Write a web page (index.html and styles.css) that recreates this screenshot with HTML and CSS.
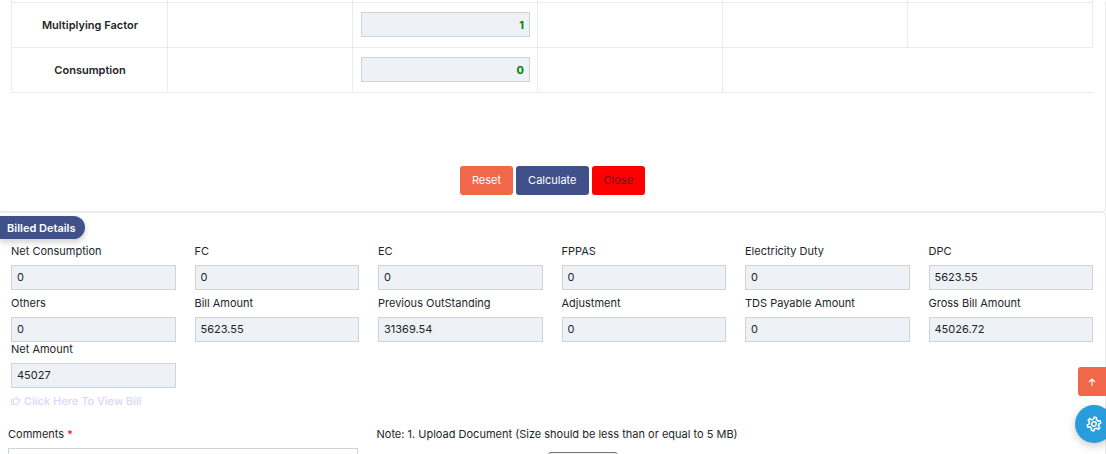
FILE: index.html
```html
<!DOCTYPE html>
<html lang="en">
<head>
    <meta charset="UTF-8">
    <meta name="viewport" content="width=device-width, initial-scale=1.0">
    <title>Billed Details</title>
    <link rel="stylesheet" href="styles.css">
</head>
<body>

    <section class="card">
        <table class="readings">
            <colgroup>
                <col class="col-name">
                <col><col><col><col><col>
            </colgroup>
            <tr class="row-end">
                <th></th><td></td><td></td><td></td><td></td><td></td>
            </tr>
            <tr>
                <th scope="row"><label for="factor">Multiplying Factor</label></th>
                <td></td>
                <td><input type="text" class="field reading" id="factor" value="1" readonly></td>
                <td></td>
                <td></td>
                <td></td>
            </tr>
            <tr>
                <th scope="row"><label for="consumption">Consumption</label></th>
                <td></td>
                <td><input type="text" class="field reading" id="consumption" value="0" readonly></td>
                <td></td>
                <td colspan="2" class="open"></td>
            </tr>
        </table>

        <div class="actions">
            <button type="reset" class="btn btn-reset">Reset</button>
            <button type="button" class="btn btn-calc">Calculate</button>
            <button type="button" class="btn btn-close">Close</button>
        </div>
    </section>

    <section class="card billed">
        <h2 class="badge">Billed Details</h2>

        <div class="grid">
            <div class="group">
                <label for="netConsumption">Net Consumption</label>
                <input type="text" class="field" id="netConsumption" value="0" readonly>
            </div>
            <div class="group">
                <label for="fc">FC</label>
                <input type="text" class="field" id="fc" value="0" readonly>
            </div>
            <div class="group">
                <label for="ec">EC</label>
                <input type="text" class="field" id="ec" value="0" readonly>
            </div>
            <div class="group">
                <label for="fppas">FPPAS</label>
                <input type="text" class="field" id="fppas" value="0" readonly>
            </div>
            <div class="group">
                <label for="duty">Electricity Duty</label>
                <input type="text" class="field" id="duty" value="0" readonly>
            </div>
            <div class="group">
                <label for="dpc">DPC</label>
                <input type="text" class="field" id="dpc" value="5623.55" readonly>
            </div>
            <div class="group">
                <label for="others">Others</label>
                <input type="text" class="field" id="others" value="0" readonly>
            </div>
            <div class="group">
                <label for="billAmount">Bill Amount</label>
                <input type="text" class="field" id="billAmount" value="5623.55" readonly>
            </div>
            <div class="group">
                <label for="previous">Previous OutStanding</label>
                <input type="text" class="field" id="previous" value="31369.54" readonly>
            </div>
            <div class="group">
                <label for="adjustment">Adjustment</label>
                <input type="text" class="field" id="adjustment" value="0" readonly>
            </div>
            <div class="group">
                <label for="tds">TDS Payable Amount</label>
                <input type="text" class="field" id="tds" value="0" readonly>
            </div>
            <div class="group">
                <label for="gross">Gross Bill Amount</label>
                <input type="text" class="field" id="gross" value="45026.72" readonly>
            </div>
        </div>

        <div class="grid">
            <div class="group">
                <label for="netAmount">Net Amount</label>
                <input type="text" class="field" id="netAmount" value="45027" readonly>
            </div>
        </div>

        <a href="#" class="view-bill">
            <svg width="10" height="9" viewBox="0 0 20 18" fill="none" stroke="currentColor" stroke-width="2" stroke-linejoin="round" aria-hidden="true">
                <path d="M1 7h4v10H1zM5 7.500c2 0 3.500-2.500 4-4.500.4-2 3.500-2 3.200.5 0 1-.5 2-1 3H17c2.700 0 2.700 3.500 0 3.500h-3M15.500 10c1 1.200.5 2.800-1 3M14.500 13c.8 1.200.3 2.500-1 2.700M13.500 15.500c0 1-.6 1.500-1.500 1.500H9c-1.800 0-2.500-1-4-1"/>
            </svg>
            Click Here To View Bill
        </a>

        <div class="bottom">
            <div class="comments">
                <label for="comments">Comments <span class="required">*</span></label>
                <textarea id="comments" rows="3"></textarea>
            </div>
            <div class="upload">
                <p>Note: 1. Upload Document (Size should be less than or equal to 5 MB)</p>
                <button type="button" class="file-btn" aria-label="Choose file"></button>
            </div>
        </div>
    </section>

    <button type="button" class="to-top" aria-label="Back to top">
        <svg width="8" height="8" viewBox="0 0 8 8" fill="none" stroke="currentColor" stroke-width="1.2" aria-hidden="true">
            <path d="M4 8V1M1 4l3-3 3 3"/>
        </svg>
    </button>
    <button type="button" class="settings" aria-label="Settings">
        <svg width="18" height="18" viewBox="0 0 24 24" fill="currentColor" aria-hidden="true">
            <path transform="rotate(12 12 12)" d="M12 8a4 4 0 0 1 4 4 4 4 0 0 1-4 4 4 4 0 0 1-4-4 4 4 0 0 1 4-4m0 2a2 2 0 0 0-2 2 2 2 0 0 0 2 2 2 2 0 0 0 2-2 2 2 0 0 0-2-2m-2 12c-.25 0-.46-.18-.5-.42l-.37-2.650c-.63-.25-1.170-.59-1.690-.99l-2.490 1.010c-.22.080-.49 0-.61-.22l-2-3.460c-.13-.22-.07-.49.12-.64l2.110-1.660L4.500 12l.07-1-2.110-1.630c-.19-.15-.25-.42-.12-.64l2-3.460c.12-.22.39-.31.61-.22l2.490 1c.52-.39 1.060-.73 1.690-.98l.37-2.650c.04-.24.25-.42.5-.42h4c.25 0 .46.18.5.42l.37 2.650c.63.25 1.170.59 1.690.98l2.490-1c.22-.09.49 0 .61.22l2 3.460c.13.22.07.49-.12.64L19.430 11l.07 1-.07 1 2.110 1.630c.19.15.25.42.12.64l-2 3.460c-.12.22-.39.31-.61.22l-2.490-1c-.52.39-1.060.73-1.690.98l-.37 2.650c-.04.24-.25.42-.5.42h-4m1.250-18-.37 2.610c-1.200.25-2.260.89-3.030 1.780L5.440 7.350l-.75 1.300L6.800 10.200a6.500 6.500 0 0 0 0 3.600l-2.120 1.560.75 1.300 2.430-1.040c.77.880 1.820 1.520 3.010 1.760l.37 2.620h1.520l.37-2.610c1.190-.25 2.240-.89 3.010-1.770l2.430 1.040.75-1.300-2.120-1.550c.4-1.170.4-2.440 0-3.610l2.110-1.550-.75-1.300-2.410 1.040a5.420 5.420 0 0 0-3.030-1.770L12.750 4h-1.500z"/>
        </svg>
    </button>

</body>
</html>
```
FILE: styles.css
```css
* {
    box-sizing: border-box;
}

body {
    font-family: Inter, "Open Sans", sans-serif;
    font-size: 11px;
    line-height: 16px;
    color: #212529;
    background-color: #fff;
    margin: 0;
    height: 100vh;
    overflow: hidden;
}

input, button, textarea {
    font: inherit;
}

.card {
    border-right: 1px solid #ebebeb;
    border-bottom: 1px solid #ebebeb;
    border-radius: 0 4px 4px 0;
}

.billed {
    border-top: 1px solid #ebebeb;
    padding-top: 3px;
}

/* readings table */
.readings {
    width: calc(100% - 23px);
    margin-left: 11px;
    border-collapse: collapse;
    table-layout: fixed;
}

.col-name {
    width: 156px;
}

.readings th, .readings td {
    height: 45px;
    padding: 0 7px 0 8px;
    border: 1px solid #ebebeb;
    text-align: center;
    vertical-align: middle;
}

.readings th {
    font-weight: 600;
}

.readings .row-end th, .readings .row-end td {
    height: 2px;
    border-top: none;
}

.readings .open {
    border-right: none;
}

.field {
    display: block;
    width: 100%;
    height: 25px;
    padding: 0 5px;
    border: 1px solid #ced4da;
    border-radius: 0;
    background-color: #eef2f7;
    color: #212529;
}

.reading {
    color: green;
    font-weight: 700;
    text-align: right;
}

/* buttons */
.actions {
    display: flex;
    justify-content: center;
    gap: 3px;
    padding: 73px 0 16px;
}

.btn {
    height: 29px;
    padding: 0 12px;
    border: none;
    border-radius: 3px;
    color: #fff;
    cursor: pointer;
}

.btn-reset {
    background-color: #f1674a;
}

.btn-calc {
    background-color: #405189;
}

.btn-close {
    background-color: #f00;
    color: #6b1518;
}

/* billed details */
.badge {
    width: fit-content;
    margin: 0 0 5px;
    padding: 4px 9px 3px 7px;
    border-radius: 0 12px 12px 0;
    background-color: #405189;
    box-shadow: 0 3px 6px rgba(0, 0, 0, 0.2);
    color: #fff;
    font-size: 11px;
    font-weight: 600;
}

.grid {
    display: grid;
    grid-template-columns: repeat(6, 1fr);
    gap: 6px 19px;
    padding: 0 12px 0 11px;
}

.group label {
    display: block;
    margin-bottom: 7px;
    line-height: 14px;
}

.view-bill {
    display: flex;
    align-items: center;
    gap: 3px;
    width: fit-content;
    margin: 5px 0 0 11px;
    color: #d9d6ff;
    font-weight: 500;
    text-decoration: none;
}

.bottom {
    display: grid;
    grid-template-columns: 20fr 41fr;
    gap: 19px;
    padding: 17px 12px 0 8px;
}

.comments label {
    display: block;
    margin-bottom: 6px;
}

.comments textarea {
    display: block;
    width: 100%;
    border: 1px solid #ced4da;
}

.required {
    color: #f00;
}

.upload p {
    margin: 0 0 10px;
}

.file-btn {
    display: block;
    width: 70px;
    height: 22px;
    margin-left: 171px;
    border: 1px solid #767676;
    border-radius: 3px;
    background-color: #efefef;
}

/* floating buttons */
.to-top, .settings {
    position: fixed;
    display: flex;
    align-items: center;
    justify-content: center;
    padding: 0;
    border: none;
    color: #fff;
    cursor: pointer;
}

.to-top {
    right: 0;
    bottom: 58px;
    width: 28px;
    height: 29px;
    border-radius: 3px 0 0 3px;
    background-color: #f1674a;
}

.settings {
    right: -7px;
    bottom: 11px;
    width: 38px;
    height: 38px;
    border-radius: 50%;
    background-color: #299cdb;
    box-shadow: 0 3px 8px rgba(0, 0, 0, 0.2);
}
```
